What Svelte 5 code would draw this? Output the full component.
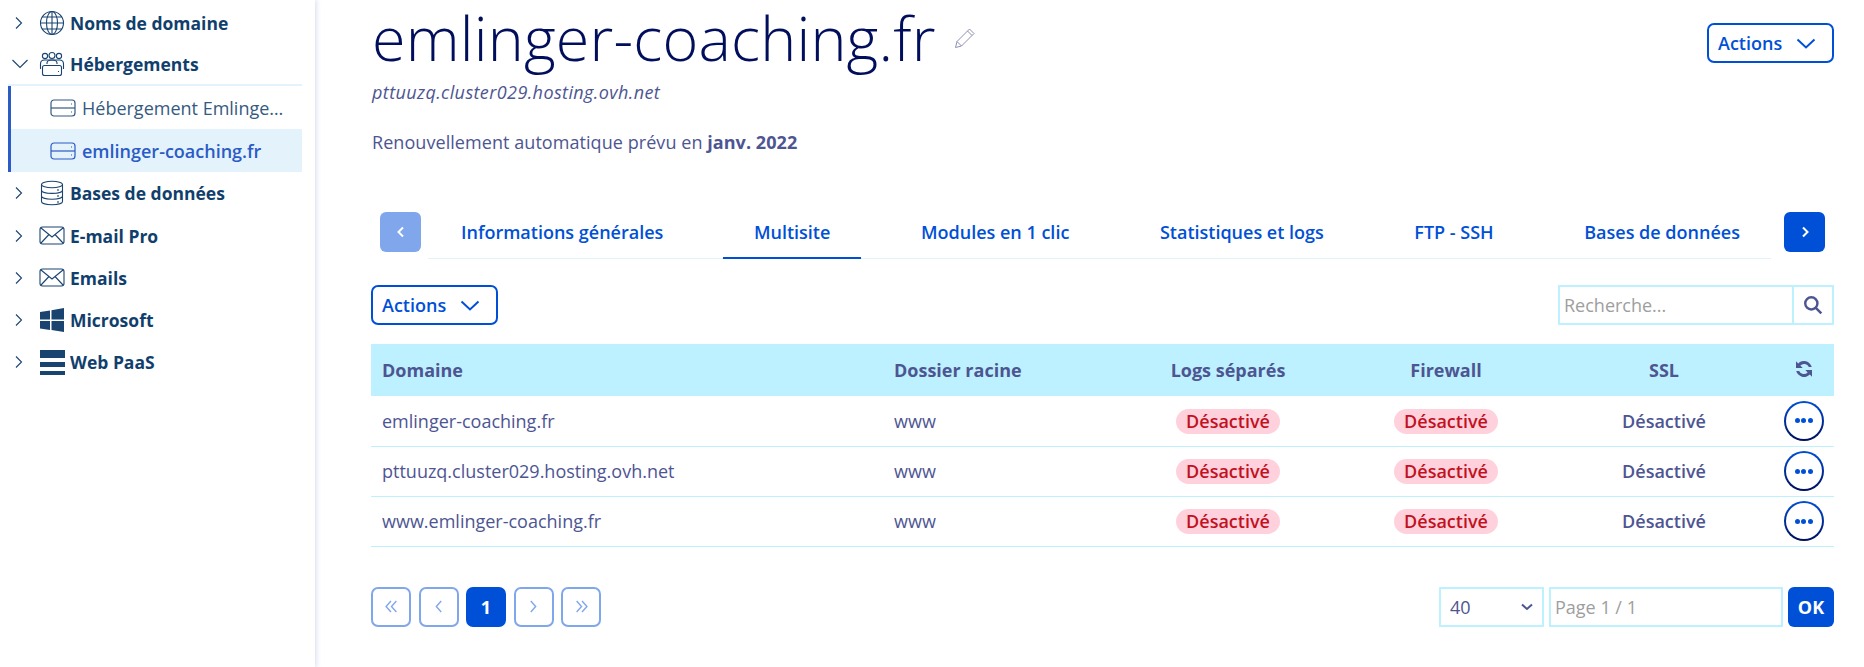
<script>
  const nav = [
    { label: 'Noms de domaine', icon: 'globe' },
    { label: 'Hébergements', icon: 'team', open: true, children: [
      { label: 'Hébergement Emlinger-coaching', active: false },
      { label: 'emlinger-coaching.fr', active: true }
    ] },
    { label: 'Bases de données', icon: 'db' },
    { label: 'E-mail Pro', icon: 'mail' },
    { label: 'Emails', icon: 'mail' },
    { label: 'Microsoft', icon: 'win' },
    { label: 'Web PaaS', icon: 'paas' }
  ];
  const tabs = ['Informations générales', 'Multisite', 'Modules en 1 clic', 'Statistiques et logs', 'FTP - SSH', 'Bases de données'];
  const rows = ['emlinger-coaching.fr', 'pttuuzq.cluster029.hosting.ovh.net', 'www.emlinger-coaching.fr'];
</script>

{#snippet server()}
  <svg class="srv" viewBox="0 0 26 18" fill="none" stroke="currentColor" stroke-width="1.2">
    <rect x="1" y="1" width="24" height="16" rx="3" /><path d="M1 9h24" /><path d="M21 5h1M21 13h1" />
  </svg>
{/snippet}

{#snippet navIcon(name)}
  <svg class="nicon" viewBox="0 0 26 26" fill="none" stroke="#1a4470" stroke-width="1.1">
    {#if name === 'globe'}
      <circle cx="13" cy="13" r="11.5" /><ellipse cx="13" cy="13" rx="5.5" ry="11.5" /><path d="M13 1.5v23M1.5 13h23M3.2 7h19.6M3.2 19h19.6" />
    {:else if name === 'team'}
      <circle cx="6" cy="5" r="2.6" /><circle cx="13" cy="4.5" r="3" /><circle cx="20" cy="5" r="2.6" />
      <path d="M1.500 18v-5q0-4 4-4h15q4 0 4 4v5" /><path d="M8 13v-1q0-3 5-3t5 3v1" /><rect x="3.500" y="14.500" width="19" height="10" rx="2" fill="#fff" /><path d="M19 20.500h1" />
    {:else if name === 'db'}
      <ellipse cx="13" cy="4.500" rx="10.500" ry="3.200" /><path d="M2.500 4.500v17c0 1.800 4.700 3.200 10.500 3.200s10.500-1.400 10.500-3.200v-17M2.500 10.200c0 1.800 4.700 3.200 10.500 3.200s10.500-1.400 10.500-3.200M2.500 16c0 1.800 4.700 3.200 10.500 3.200s10.500-1.400 10.500-3.200M19 9v2M19 15v2M19 21v2" />
    {:else if name === 'mail'}
      <rect x="1" y="4" width="24" height="17" rx="2.500" /><path d="M2 5l11 9 11-9M2 20l8-8.500M24 20l-8-8.500" />
    {:else if name === 'win'}
      <path stroke="none" fill="#1a4470" d="M1 5l10-1.500v9H1zM12.500 3.200L25 1v11.500H12.500zM1 14h10v9L1 21.500zM12.500 14H25v11l-12.500-2z" />
    {:else}
      <path stroke="none" fill="#1a4470" d="M1 1h25v8H1zM1 13h25v5H1zM1 22h25v4H1z" />
    {/if}
  </svg>
{/snippet}

{#snippet caret()}
  <svg class="caret" viewBox="0 0 20 11" fill="none" stroke="currentColor" stroke-width="2"><path d="M1.500 1.500L10 9.500l8.500-8" /></svg>
{/snippet}

<div class="page">
  <aside>
    <ul class="tree">
      {#each nav as item}
        <li class:open={item.open}>
          <div class="row">
            <svg class="chev" viewBox="0 0 16 12" fill="none" stroke="#1a4470" stroke-width="1.100">
              {#if item.open}<path d="M.5 2l7.500 7.500L15.500 2" />{:else}<path d="M4 .5L9.500 6 4 11.500" />{/if}
            </svg>
            {@render navIcon(item.icon)}
            <span>{item.label}</span>
          </div>
          {#if item.children}
            <ul class="sub">
              {#each item.children as child}
                <li class:active={child.active}>
                  {@render server()}
                  <span>{child.label}</span>
                </li>
              {/each}
            </ul>
          {/if}
        </li>
      {/each}
    </ul>
  </aside>

  <main>
    <header>
      <div>
        <div class="titleline">
          <h1>emlinger-coaching.fr</h1>
          <svg class="pencil" viewBox="0 0 22 22" fill="none" stroke="#8d8fb5" stroke-width="1"><path d="M1.500 20.500l1.500-6L15.500 2l4.500 4.500L7.500 19zM3 14.500L7.500 19M13.500 4l4.500 4.500" /></svg>
        </div>
        <p class="host">pttuuzq.cluster029.hosting.ovh.net</p>
        <p class="renew">Renouvellement automatique prévu en <b>janv. 2022</b></p>
      </div>
      <button class="actions">Actions {@render caret()}</button>
    </header>

    <nav class="tabs">
      <button class="arrow off" aria-label="Précédent"><svg viewBox="0 0 8 12" fill="none" stroke="#fff" stroke-width="2"><path d="M6 1.500L1.500 6 6 10.500" /></svg></button>
      <div class="tablist">
        {#each tabs as tab, i}
          <a class:current={i === 1} href="#top">{tab}</a>
        {/each}
      </div>
      <button class="arrow" aria-label="Suivant"><svg viewBox="0 0 8 12" fill="none" stroke="#fff" stroke-width="2"><path d="M2 1.500L6.500 6 2 10.500" /></svg></button>
    </nav>

    <div class="toolbar">
      <button class="actions">Actions {@render caret()}</button>
      <div class="search">
        <input placeholder="Recherche..." />
        <span class="mag">
          <svg viewBox="0 0 18 18" fill="none" stroke="#4d5592" stroke-width="2.200"><circle cx="7.500" cy="7.500" r="5.500" /><path d="M11.500 11.500L16.500 16.500" /></svg>
        </span>
      </div>
    </div>

    <table>
      <colgroup><col class="c1" /><col class="c2" /><col class="c3" /><col class="c3" /><col class="c3" /><col /></colgroup>
      <thead>
        <tr>
          <th>Domaine</th><th>Dossier racine</th><th class="ctr">Logs séparés</th><th class="ctr">Firewall</th><th class="ctr">SSL</th>
          <th class="ctr"><svg class="refresh" viewBox="0 0 18 18" fill="#4d5592"><path d="M16 7.200A7.300 7.300 0 0 0 3.800 4L1.800 2v6h6L5.700 5.900a4.700 4.700 0 0 1 7.700 1.300zM2 10.800A7.300 7.300 0 0 0 14.200 14l2 2v-6h-6l2.100 2.100a4.700 4.700 0 0 1-7.700-1.300z" /></svg></th>
        </tr>
      </thead>
      <tbody>
        {#each rows as r}
          <tr>
            <td>{r}</td><td>www</td>
            <td class="ctr"><span class="off-badge">Désactivé</span></td>
            <td class="ctr"><span class="off-badge">Désactivé</span></td>
            <td class="ctr strong">Désactivé</td>
            <td class="ctr"><button class="more" aria-label="Plus"><i></i><i></i><i></i></button></td>
          </tr>
        {/each}
      </tbody>
    </table>

    <div class="pager">
      <div class="pages">
        <button class="pg" aria-label="Première"><svg viewBox="0 0 12 12" fill="none" stroke="currentColor" stroke-width="1.300"><path d="M5.500 1L1 6l4.500 5M10.500 1L6 6l4.500 5" /></svg></button>
        <button class="pg" aria-label="Précédente"><svg viewBox="0 0 12 12" fill="none" stroke="currentColor" stroke-width="1.300"><path d="M8.500 1L4 6l4.500 5" /></svg></button>
        <button class="pg now">1</button>
        <button class="pg" aria-label="Suivante"><svg viewBox="0 0 12 12" fill="none" stroke="currentColor" stroke-width="1.300"><path d="M3.500 1L8 6l-4.500 5" /></svg></button>
        <button class="pg" aria-label="Dernière"><svg viewBox="0 0 12 12" fill="none" stroke="currentColor" stroke-width="1.300"><path d="M1.500 1L6 6l-4.500 5M6.500 1L11 6l-4.500 5" /></svg></button>
      </div>
      <div class="goto">
        <div class="select"><span>40</span><svg viewBox="0 0 12 8" fill="none" stroke="#4d5592" stroke-width="2"><path d="M1 1.500l5 4.500 5-4.500" /></svg></div>
        <input class="pageinput" placeholder="Page 1 / 1" />
        <button class="ok">OK</button>
      </div>
    </div>
  </main>
</div>

<style>
  :global(body) { margin: 0; background: #fff; font-family: "Open Sans", "Noto Sans", sans-serif; }
  * { box-sizing: border-box; }
  button, input { font-family: inherit; }
  .page { display: flex; height: 667px; overflow: hidden; color: #4d5592; font-size: 18px; }

  aside { width: 315px; flex: none; box-shadow: 2px 0 4px rgba(90, 100, 190, .18); padding: 2px 13px 0 8px; }
  ul { list-style: none; margin: 0; padding: 0; }
  .tree > li > .row { display: flex; align-items: center; height: 42.200px; padding-left: 4px; color: #113f6d; font-weight: 700; font-size: 17.500px; }
  .chev { width: 16px; height: 12px; margin-right: 11px; flex: none; }
  .nicon { width: 26px; height: 26px; margin-right: 5px; flex: none; }
  .open > .row { border-bottom: 2px solid #e3f2fb; }
  .sub { border-left: 3px solid #2a5bc6; }
  .sub li { display: flex; align-items: center; height: 43px; padding-left: 39px; color: #355a80; font-size: 18px; }
  .sub li span { overflow: hidden; white-space: nowrap; text-overflow: ellipsis; width: 206px; }
  .sub li.active { background: #e4f3fb; color: #2a5bc6; font-weight: 600; }
  .srv { width: 26px; height: 18px; margin-right: 6px; flex: none; }

  main { flex: 1; padding: 0 30px 0 56px; min-width: 0; }
  header { display: flex; justify-content: space-between; align-items: flex-start; height: 212px; }
  .titleline { display: flex; align-items: center; height: 76px; margin-left: 1px; }
  h1 { margin: 0; font-weight: 300; font-size: 61px; line-height: 76px; color: #000e5c; letter-spacing: .2px; }
  .pencil { width: 22px; height: 22px; margin-left: 18px; }
  p { margin: 0; margin-left: 1px; }
  .host { font-style: italic; font-size: 18px; line-height: 24px; height: 24px; margin-top: 4px; font-weight: 400; letter-spacing: .4px; }
  .renew { font-size: 18px; line-height: 24px; margin-top: 26px; font-weight: 400; letter-spacing: .06px; }
  .renew b { font-weight: 700; }
  .actions { display: inline-flex; align-items: center; justify-content: space-between; width: 127px; height: 40px; margin-top: 23px; padding: 0 16px 0 9px; border: 2px solid #0050d7; border-radius: 7px; background: #fff; color: #0050d7; font-size: 18px; font-weight: 600; }
  .caret { width: 20px; height: 11px; }

  .tabs { display: flex; align-items: flex-start; height: 73px; margin-left: 9px; margin-right: 9px; }
  .arrow { width: 41px; height: 40px; border: 0; border-radius: 6px; background: #0050d7; padding: 0; display: flex; align-items: center; justify-content: center; flex: none; }
  .arrow.off { background: #80a7ec; }
  .arrow svg { width: 8px; height: 12px; }
  .tablist { flex: 1; display: flex; justify-content: space-between; margin: 0 13px 0 7px; height: 47px; border-bottom: 1px solid #e3f2fb; padding: 0 0 0 2px; }
  .tablist a { height: 47px; padding: 8px 31px 0; text-decoration: none; color: #0050d7; font-size: 18px; font-weight: 600; white-space: nowrap; }
  .tablist a.current { border-bottom: 2px solid #0050d7; }

  .toolbar { display: flex; justify-content: space-between; align-items: flex-start; height: 59px; }
  .toolbar .actions { margin: 0; }
  .search { display: flex; width: 276px; height: 40px; border: 2px solid #bef1ff; }
  .search input { flex: 1; min-width: 0; border: 0; outline: 0; padding: 0 4px; font-size: 18px; color: #4d5592; }
  input::placeholder { color: #9e9e9e; opacity: 1; }
  .mag { width: 40px; border-left: 2px solid #bef1ff; display: flex; align-items: center; justify-content: center; }
  .mag svg { width: 20px; height: 20px; }

  table { width: 100%; border-collapse: collapse; table-layout: fixed; font-size: 18px; }
  .c1 { width: 512px; } .c2 { width: 236px; } .c3 { width: 218px; }
  th { height: 52px; background: #bef1ff; text-align: left; padding: 0 11px 1px; font-weight: 700; }
  td { height: 50px; padding: 0 11px; border-bottom: 1px solid #bef1ff; font-weight: 400; }
  .ctr { text-align: center; padding: 0; }
  td.strong { font-weight: 600; padding: 0; }
  .off-badge { display: inline-block; height: 25px; line-height: 25px; padding: 0 10px; border-radius: 13px; background: #ffd1dc; color: #c3101f; font-weight: 600; vertical-align: middle; }
  .refresh { display: block; margin: -2px auto 0; width: 20px; height: 20px; }
  .more { width: 40px; height: 40px; border-radius: 50%; border: 2px solid transparent; background: linear-gradient(#fff, #fff) padding-box, linear-gradient(#0050d7, #000e5c) border-box; display: inline-flex; gap: 1.500px; align-items: center; justify-content: center; padding: 0; vertical-align: middle; }
  .more i { width: 5px; height: 5px; border-radius: 50%; background: #0050d7; }

  .pager { display: flex; justify-content: space-between; align-items: center; margin-top: 40px; }
  .pages { display: flex; gap: 7.500px; }
  .pg { width: 40px; height: 40px; border: 2px solid #80a7ec; border-radius: 7px; background: #fff; color: #80a7ec; padding: 0; display: flex; align-items: center; justify-content: center; }
  .pg svg { width: 13px; height: 13px; }
  .pg.now { background: #0050d7; border-color: #0050d7; color: #fff; font-weight: 700; font-size: 18px; }
  .goto { display: flex; }
  .select { width: 105px; height: 40px; border: 2px solid #bef1ff; display: flex; align-items: center; justify-content: space-between; padding: 0 9px 0 9px; font-size: 18px; margin-right: 5px; }
  .select svg { width: 12px; height: 8px; }
  .pageinput { width: 234px; height: 40px; border: 2px solid #bef1ff; outline: 0; padding: 0 4px; font-size: 18px; margin-right: 5px; }
  .ok { width: 46px; height: 40px; border: 0; border-radius: 6px; background: #0050d7; color: #fff; font-weight: 700; font-size: 18px; padding: 0; }
</style>
